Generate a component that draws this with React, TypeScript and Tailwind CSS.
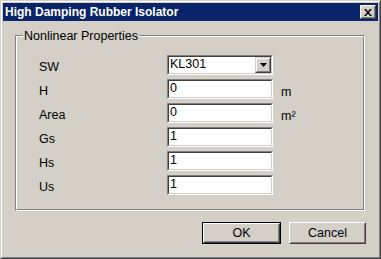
import React from "react";

const font = { fontFamily: '"Liberation Sans", Arial, sans-serif' };

function Sunken({ children, w = "w-[106px]" }: { children?: React.ReactNode; w?: string }) {
  return (
    <div className={`${w} h-[20px] border border-t-[#808080] border-l-[#808080] border-b-white border-r-white`}>
      <div className="h-full w-full border border-t-[#404040] border-l-[#404040] border-b-[#d4d0c8] border-r-[#d4d0c8] bg-white flex items-start">
        {children}
      </div>
    </div>
  );
}

function TextBox({ value }: { value: string }) {
  return (
    <Sunken>
      <span className="pl-[1px] leading-[14px] text-[12.5px] text-black">{value}</span>
    </Sunken>
  );
}

function Combo({ value }: { value: string }) {
  return (
    <Sunken>
      <div className="flex h-full w-full items-start justify-between">
        <span className="pl-[1px] leading-[15px] text-[12.5px] text-black">{value}</span>
        <div className="h-[16px] w-[16px] border border-t-[#d4d0c8] border-l-[#d4d0c8] border-b-[#404040] border-r-[#404040]">
          <div className="flex h-full w-full items-center justify-center border border-t-white border-l-white border-b-[#808080] border-r-[#808080] bg-[#d4d0c8]">
            <svg width="7" height="4" viewBox="0 0 7 4">
              <path d="M0 0h7L3.5 4z" fill="#000" />
            </svg>
          </div>
        </div>
      </div>
    </Sunken>
  );
}

function Row({ label, children, unit }: { label: string; children: React.ReactNode; unit?: React.ReactNode }) {
  return (
    <div className="flex h-[20px] items-center">
      <span className="w-[128px] pt-[3px] text-[12.5px] leading-[14px] text-black">{label}</span>
      {children}
      {unit && <span className="ml-[8px] pt-[5px] text-[12.5px] leading-[14px] text-black">{unit}</span>}
    </div>
  );
}

function Button({ label, def, w }: { label: string; def?: boolean; w: string }) {
  if (def) {
    return (
      <div className={`${w} h-[22px] border border-black`}>
        <div className="h-full w-full border border-t-white border-l-white border-b-[#404040] border-r-[#404040]">
          <div className="flex h-full w-full items-center justify-center border border-t-[#d4d0c8] border-l-[#d4d0c8] border-b-[#808080] border-r-[#808080] text-[12.5px] text-black">
            {label}
          </div>
        </div>
      </div>
    );
  }
  return (
    <div className={`${w} h-[22px] border border-t-white border-l-white border-b-[#404040] border-r-[#404040]`}>
      <div className="flex h-full w-full items-center justify-center border border-t-[#d4d0c8] border-l-[#d4d0c8] border-b-[#808080] border-r-[#808080] text-[12.5px] text-black">
        {label}
      </div>
    </div>
  );
}

export default function App() {
  return (
    <div style={font} className="h-[259px] w-[381px] border border-t-[#d4d0c8] border-l-[#d4d0c8] border-b-[#404040] border-r-[#404040] bg-[#d4d0c8]">
      <div className="flex h-full w-full flex-col border border-t-white border-l-white border-b-[#808080] border-r-[#808080] p-px">
        {/* Title bar */}
        <div className="flex h-[18px] items-center justify-between bg-[#0a246a] pl-[2px] pr-[2px]">
          <span className="text-[12px] font-bold leading-[14px] text-white">High Damping Rubber Isolator</span>
          <div className="h-[14px] w-[16px] border border-t-white border-l-white border-b-[#404040] border-r-[#404040]">
            <div className="flex h-full w-full items-center justify-center border border-t-[#d4d0c8] border-l-[#d4d0c8] border-b-[#808080] border-r-[#808080] bg-[#d4d0c8]">
              <svg width="8" height="7" viewBox="0 0 8 7">
                <path d="M0 0h2l2 2.5L6 0h2L5 3.5 8 7H6L4 4.5 2 7H0l3-3.5z" fill="#000" />
              </svg>
            </div>
          </div>
        </div>

        {/* Group box */}
        <div className="ml-[12px] mt-[14px] h-[176px] w-[350px] border border-t-[#808080] border-l-[#808080] border-b-white border-r-white">
          <div className="flex h-full w-full flex-col border border-t-white border-l-white border-b-[#808080] border-r-[#808080]">
            <span className="-mt-[8px] ml-[6px] self-start bg-[#d4d0c8] px-[1px] text-[12.5px] leading-[14px] text-black">
              Nonlinear Properties
            </span>
            <div className="mt-[12px] flex flex-col gap-[4px] pl-[22px]">
              <Row label="SW">
                <Combo value="KL301" />
              </Row>
              <Row label="H" unit="m">
                <TextBox value="0" />
              </Row>
              <Row label="Area" unit="m²">
                <TextBox value="0" />
              </Row>
              <Row label="Gs">
                <TextBox value="1" />
              </Row>
              <Row label="Hs">
                <TextBox value="1" />
              </Row>
              <Row label="Us">
                <TextBox value="1" />
              </Row>
            </div>
          </div>
        </div>

        {/* Buttons */}
        <div className="mt-[11px] flex justify-end gap-[8px] pr-[12px]">
          <Button label="OK" def w="w-[79px]" />
          <Button label="Cancel" w="w-[77px]" />
        </div>
      </div>
    </div>
  );
}
